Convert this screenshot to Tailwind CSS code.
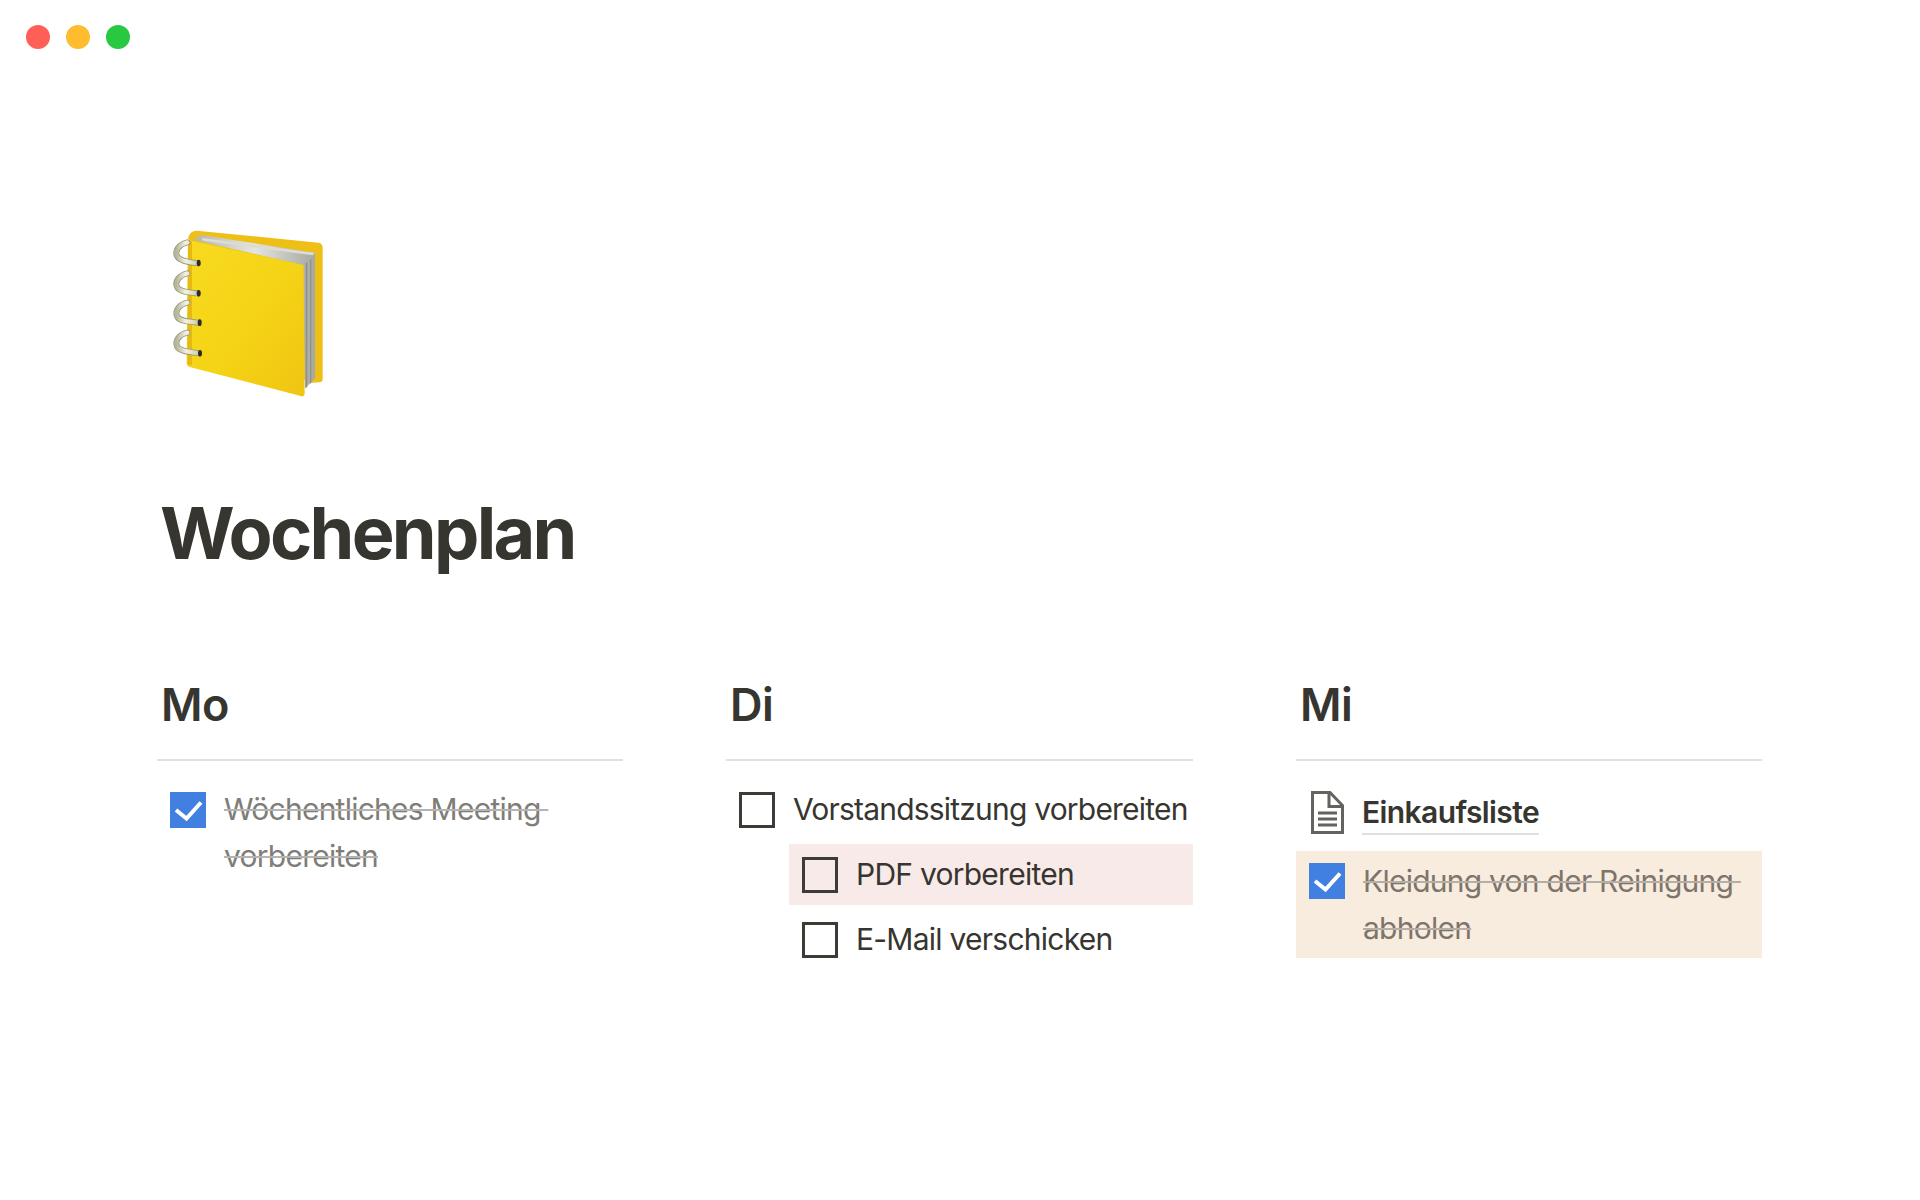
<!DOCTYPE html>
<html lang="de">
<head>
  <meta charset="UTF-8" />
  <title>Wochenplan</title>
  <script src="https://cdn.jsdelivr.net/npm/@tailwindcss/browser@4"></script>
</head>
<body class="bg-white text-[#37352f] font-['Inter',sans-serif] overflow-hidden">
<div class="w-[1920px] h-[1200px] relative">

  <!-- window buttons -->
  <div class="flex gap-4 pt-[25px] pl-[26px]">
    <div class="w-6 h-6 rounded-full bg-[#ff5f57]"></div>
    <div class="w-6 h-6 rounded-full bg-[#febc2e]"></div>
    <div class="w-6 h-6 rounded-full bg-[#28c840]"></div>
  </div>

  <!-- notebook icon -->
  <svg class="block w-[200px] h-[200px] ml-[150px] mt-[161px]" viewBox="0 0 600 600">
    <defs>
      <linearGradient id="cover" x1="0" y1="0" x2="1" y2="1">
        <stop offset="0" stop-color="#f7da20"/>
        <stop offset="0.5" stop-color="#f5d416"/>
        <stop offset="1" stop-color="#f0c512"/>
      </linearGradient>
      <linearGradient id="pages" x1="0" y1="0" x2="1" y2="0">
        <stop offset="0" stop-color="#b4b6ae"/>
        <stop offset="0.5" stop-color="#e4e5de"/>
        <stop offset="1" stop-color="#a6a8a2"/>
      </linearGradient>
      <linearGradient id="ring" x1="0" y1="0" x2="1" y2="0">
        <stop offset="0" stop-color="#b5b69a"/>
        <stop offset="0.45" stop-color="#f4f2e0"/>
        <stop offset="1" stop-color="#cfcea8"/>
      </linearGradient>
    </defs>
    <path d="M114 84Q120 62 140 62L505 98Q518 100 518 112L518 508Q518 516 508 517L470 520L300 300Z" fill="#eebf14"/>
    <path d="M130 90L155 75L495 128L495 505L465 535L460 165Z" fill="url(#pages)"/>
    <path d="M155 84L495 128L488 136L160 92Z" fill="#dcdcd4"/>
    <path d="M467 160L472 156L472 530L467 535ZM480 150L484 146L484 518L480 522Z" fill="#8f918b"/>
    <path d="M114 90L460 165L464 552Q462 562 452 558L116 470Q110 468 110 460Z" fill="url(#cover)"/>
    <path d="M126 93L126 466L112 463L114 90Z" fill="#e6ba10"/>
    <g fill="none" stroke-linecap="round">
      <path d="M112 97C88 102 72 122 82 140C90 152 112 156 142 160" stroke="#97987a" stroke-width="18"/>
      <path d="M112 97C88 102 72 122 82 140C90 152 112 156 142 160" stroke="url(#ring)" stroke-width="13"/>
      <path d="M112 190C88 195 72 215 82 233C90 245 112 247 142 250" stroke="#97987a" stroke-width="18"/>
      <path d="M112 190C88 195 72 215 82 233C90 245 112 247 142 250" stroke="url(#ring)" stroke-width="13"/>
      <path d="M112 278C88 283 72 303 82 321C90 333 112 335 144 338" stroke="#97987a" stroke-width="18"/>
      <path d="M112 278C88 283 72 303 82 321C90 333 112 335 144 338" stroke="url(#ring)" stroke-width="13"/>
      <path d="M112 368C88 373 72 393 82 411C90 423 112 425 146 430" stroke="#97987a" stroke-width="18"/>
      <path d="M112 368C88 373 72 393 82 411C90 423 112 425 146 430" stroke="url(#ring)" stroke-width="13"/>
    </g>
    <g fill="#2e2c22">
      <ellipse cx="146" cy="159" rx="6" ry="10"/>
      <ellipse cx="146" cy="250" rx="6" ry="10"/>
      <ellipse cx="149" cy="338" rx="6" ry="10"/>
      <ellipse cx="150" cy="430" rx="6" ry="10"/>
    </g>
  </svg>

  <h1 class="ml-[160px] mt-[79px] text-[72px] leading-[88px] font-bold tracking-[-2.7px]">Wochenplan</h1>

  <!-- day columns -->
  <div class="mt-[100px] ml-[157px] grid grid-cols-[466px_467px_466px] gap-x-[103px]">

    <!-- Mo -->
    <div>
      <h2 class="pl-[4px] text-[45px] leading-[56px] font-semibold h-[82px] tracking-[-0.5px]">Mo</h2>
      <div class="h-[2px] bg-[#e0e0de]"></div>
      <div class="mt-[25px] flex items-start pl-[13px]">
        <span class="w-9 h-9 mt-[6px] shrink-0 bg-[#4180e0]">
          <svg class="w-9 h-9" viewBox="0 0 36 36"><path d="M6 18L16.5 26.5L31 10.5" fill="none" stroke="#fff" stroke-width="4"/></svg>
        </span>
        <p class="ml-[18px] text-[30px] leading-[47px] tracking-[-0.75px] whitespace-nowrap text-[#7e7d78] line-through decoration-2 decoration-[#b5b4af]">Wöchentliches Meeting&nbsp;<br>vorbereiten</p>
      </div>
    </div>

    <!-- Di -->
    <div>
      <h2 class="pl-[4px] text-[45px] leading-[56px] font-semibold h-[82px] tracking-[-0.5px]">Di</h2>
      <div class="h-[2px] bg-[#e0e0de]"></div>
      <div class="mt-[25px] flex items-start pl-[13px]">
        <span class="w-9 h-9 mt-[6px] shrink-0 border-[3px] border-[#3d3b36]"></span>
        <p class="ml-[18px] text-[30px] leading-[47px] tracking-[-0.8px] whitespace-nowrap">Vorstandssitzung vorbereiten</p>
      </div>
      <div class="ml-[63px] mt-[11px] h-[61px] bg-[#f9eaea] flex items-center pl-[13px]">
        <span class="w-9 h-9 shrink-0 border-[3px] border-[#3d3b36]"></span>
        <p class="ml-[18px] text-[30px] leading-[47px] tracking-[-0.75px]">PDF vorbereiten</p>
      </div>
      <div class="ml-[63px] mt-[4px] h-[61px] flex items-center pl-[13px]">
        <span class="w-9 h-9 shrink-0 border-[3px] border-[#3d3b36]"></span>
        <p class="ml-[18px] text-[30px] leading-[47px] tracking-[-0.75px]">E-Mail verschicken</p>
      </div>
    </div>

    <!-- Mi -->
    <div>
      <h2 class="pl-[4px] text-[45px] leading-[56px] font-semibold h-[82px] tracking-[-0.5px]">Mi</h2>
      <div class="h-[2px] bg-[#e0e0de]"></div>
      <div class="mt-[30px] flex items-start pl-[15px] h-[60px]">
        <svg class="w-[33px] h-[43px] shrink-0" viewBox="0 0 33 43" fill="none" stroke="#65635e">
          <path d="M1.5 1.5H19L31.5 14.5V41.5H1.5Z" stroke-width="3"/>
          <path d="M18 1.5V15.5H31.5" stroke-width="3"/>
          <path d="M7 22H26M7 28H26M7 34H26" stroke-width="3"/>
        </svg>
        <span class="ml-[18px] mt-[2px] text-[30px] leading-[38px] font-semibold tracking-[-0.6px] border-b-[2px] border-[#dfdfdd] h-[42px]">Einkaufsliste</span>
      </div>
      <div class="h-[107px] bg-[#f8ecdf] flex items-start pl-[13px] pt-[5px]">
        <span class="w-9 h-9 mt-[7px] shrink-0 bg-[#4180e0]">
          <svg class="w-9 h-9" viewBox="0 0 36 36"><path d="M6 18L16.5 26.5L31 10.5" fill="none" stroke="#fff" stroke-width="4"/></svg>
        </span>
        <p class="ml-[18px] mt-[2px] text-[30px] leading-[47px] tracking-[-0.75px] whitespace-nowrap text-[#7d756c] line-through decoration-2 decoration-[#b8afa4]">Kleidung von der Reinigung&nbsp;<br>abholen</p>
      </div>
    </div>

  </div>
</div>
</body>
</html>
